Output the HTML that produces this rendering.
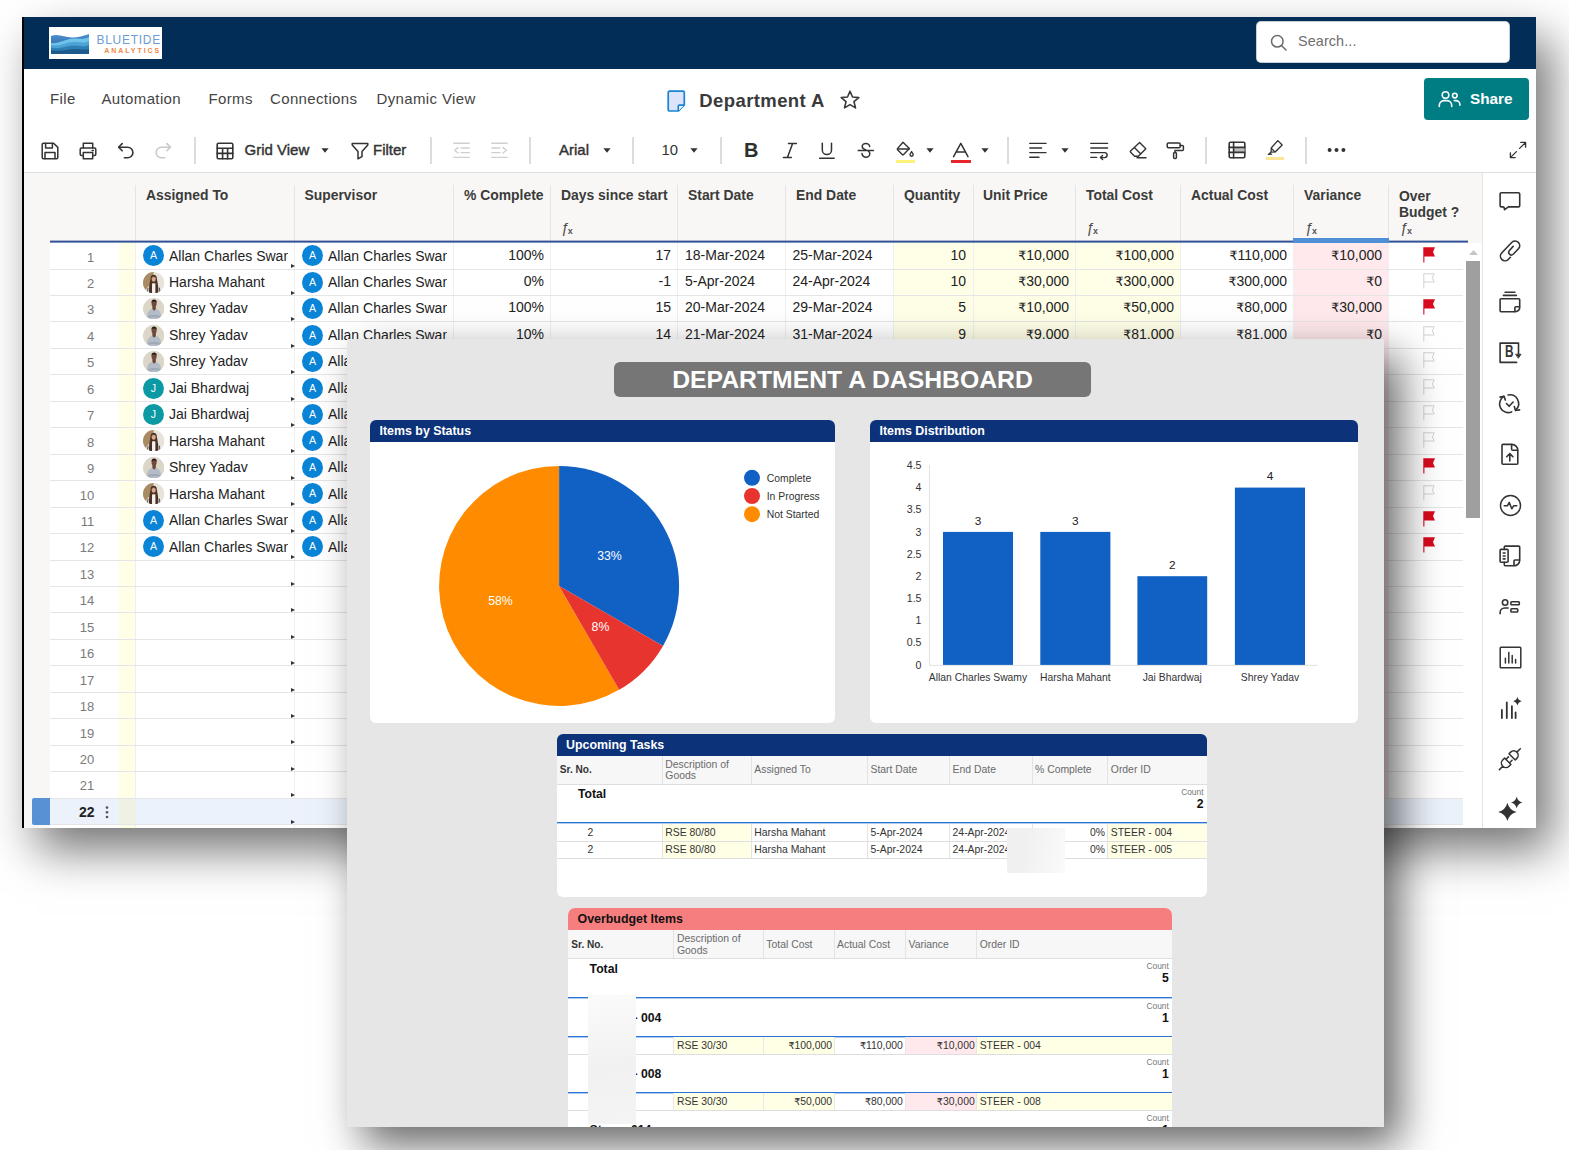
<!DOCTYPE html>
<html lang="en"><head><meta charset="utf-8"><title>Department A</title>
<style>
*{box-sizing:border-box}
html,body{margin:0;padding:0}
body{width:1569px;height:1150px;overflow:hidden;background:#fff;position:relative;font-family:"Liberation Sans","DejaVu Sans",sans-serif;color:#222}
.abs{position:absolute}
#win{position:absolute;left:22px;top:17px;width:1514px;height:811px;background:#fff;box-shadow:15px 22px 44px rgba(0,0,0,.55);overflow:hidden}
#win .lb{position:absolute;left:0;top:0;width:2px;height:811px;background:#000;z-index:9}
#hdr{position:absolute;left:0;top:0;width:1514px;height:52px;background:#012d57}
#logo{position:absolute;left:27px;top:10px;width:113px;height:32px;background:#fff;overflow:hidden}
#search{position:absolute;left:1234.5px;top:5px;width:252px;height:40.4px;background:#fff;border-radius:4px;box-shadow:0 0 0 1px #c9ced4}
#search span{position:absolute;left:41.5px;top:11px;font-size:14.4px;color:#6e6e6e;letter-spacing:.1px}
.menu{position:absolute;top:73px;font-size:15px;color:#444;line-height:18px;white-space:nowrap;letter-spacing:.36px}
#title{position:absolute;left:677.3px;top:72.6px;font-size:18.5px;font-weight:bold;color:#3a3a3a;line-height:22px;white-space:nowrap;letter-spacing:.4px}
#share{position:absolute;left:1402px;top:60.6px;width:105px;height:42.4px;background:#007d83;border-radius:4px}
#share span{position:absolute;left:46px;top:11px;font-size:15.3px;font-weight:bold;color:#fff;line-height:20px}
.tb{position:absolute;top:123px;font-size:15px;color:#333;line-height:18px;white-space:nowrap}
.sep{position:absolute;top:120px;width:2px;height:27px;background:#dcdcdc}
.ic{position:absolute;overflow:visible}

#gh{position:absolute;left:2px;top:156px;width:1458px;height:655px;background:#f8f7f5}
#tbline{position:absolute;left:2px;top:155px;width:1512px;height:1px;background:#dedede}
.hl{position:absolute;font-size:13.9px;font-weight:bold;color:#3b3b3b;line-height:16px;white-space:nowrap}
.hb{position:absolute;top:168px;width:1px;height:56px;background:#e6e5e3}
.fx{position:absolute;top:203px;font-size:14.2px;line-height:16px;color:#4a4a4a;white-space:nowrap}
.fx i{font-style:normal;font-weight:bold;font-size:9px;position:relative;top:1.6px;left:-1.6px;color:#555}
#rows{position:absolute;left:28px;top:226px;width:1432px;height:585px;background:#fff}
.rl{position:absolute;left:28px;width:1413px;height:1px;background:#e5e5e5}
.cl{position:absolute;top:226px;width:1px;height:585px;background:#efefef}
.rn{position:absolute;width:40px;text-align:right;font-size:13px;color:#7b7b7b;line-height:16px}
.c{position:absolute;font-size:14px;line-height:16px;color:#222;white-space:nowrap;overflow:hidden}
.r{text-align:right}
.c b{font-family:"DejaVu Sans",sans-serif;font-weight:normal;font-size:12.6px}
.av{position:absolute;width:21.4px;height:21.4px;border-radius:50%;color:#fff;font-size:10.6px;line-height:21.4px;text-align:center;overflow:hidden}
.tri{position:absolute;width:0;height:0;border-left:4px solid #333;border-top:2.8px solid transparent;border-bottom:2.8px solid transparent}
#side{position:absolute;left:1460px;top:156px;width:54px;height:655px;background:#fff;border-left:1px solid #e4e4e4}

#dash{position:absolute;left:347px;top:339px;width:1037px;height:788px;background:#e6e6e6;box-shadow:16px 18px 40px rgba(0,0,0,.6)}
#dashclip{position:absolute;left:0;top:0;width:1037px;height:788px;overflow:hidden}

#banner{position:absolute;background:#767676;border-radius:6px;color:#fff;font-weight:bold;font-size:24.75px;line-height:35px;text-align:center;white-space:nowrap}
.card{position:absolute;background:#fff;border-radius:6px;overflow:hidden}
.ch{position:absolute;left:0;top:0;right:0;height:22px;background:#0c3279;color:#fff;font-weight:bold;font-size:12.4px;line-height:23px;padding-left:9.5px;white-space:nowrap}
.t{position:absolute;white-space:nowrap;font-size:10.4px;line-height:12px;color:#333}
.th{position:absolute;white-space:nowrap;font-size:10.4px;line-height:11.4px;color:#6a6a6a}
.ru{font-family:"DejaVu Sans",sans-serif;font-weight:normal;font-size:9.5px}
.tr{text-align:right}
.bt{position:absolute;white-space:nowrap;font-size:12.2px;line-height:14px;font-weight:bold;color:#111}
.cnt{position:absolute;white-space:nowrap;font-size:8.4px;line-height:10px;color:#777;text-align:right}
.bl{position:absolute;height:2px;background:linear-gradient(to bottom,#2a75d6 0,#2a75d6 50%,rgba(42,117,214,.38) 50%)}
.gl{position:absolute;height:1px;background:#dedede}
.vl{position:absolute;width:1px;background:#e3e3e3}
svg text{font-family:"Liberation Sans",sans-serif}
</style></head>
<body>
<div id="win">

<div class="lb"></div>
<div id="hdr">
  <div id="logo">
    <svg class="abs" style="left:2px;top:7px" width="38" height="20" viewBox="0 0 38 20">
      <defs><linearGradient id="lg1" x1="0" y1="0" x2="0" y2="1"><stop offset="0" stop-color="#4d8fd1"/><stop offset="1" stop-color="#1f5f96"/></linearGradient></defs>
      <path d="M0 2 C8 -1 14 4 22 3.5 S34 1 38 0 V20 H0Z" fill="url(#lg1)"/>
      <path d="M0 9 C8 10 14 5 22 4.5 S33 6 38 3 V20 H0Z" fill="#6ec3e8"/>
      <path d="M0 11 C9 13 15 8 23 8 S33 10 38 7 V20 H0Z" fill="#4ba3d6"/>
      <path d="M0 13.5 C9 16 16 11 24 11.5 S34 13 38 11 V20 H0Z" fill="#2f7fb6"/>
      <path d="M0 16 C9 18.5 17 14.5 25 15 S34 16 38 15 V20 H0Z" fill="#1d5b8c"/>
    </svg>
    <span class="abs" style="left:47.5px;top:6.2px;font-size:12px;line-height:14px;color:#6d9dd1;letter-spacing:.72px;white-space:nowrap">BLUETIDE</span>
    <span class="abs" style="left:55.2px;top:20.2px;font-size:7px;line-height:8px;color:#ee8743;letter-spacing:1.95px;font-weight:bold;white-space:nowrap">ANALYTICS</span>
  </div>
  <div id="search">
    <svg class="ic" style="left:12.5px;top:11px" width="20" height="20" viewBox="0 0 20 20" fill="none" stroke="#6b6b6b" stroke-width="1.5" stroke-linecap="round"><circle cx="8.3" cy="8.3" r="5.8"/><path d="M12.7 12.7 L17 17"/></svg>
    <span>Search...</span>
  </div>
</div>
<span class="menu" style="left:28px">File</span>
<span class="menu" style="left:79.5px">Automation</span>
<span class="menu" style="left:186.5px">Forms</span>
<span class="menu" style="left:248px">Connections</span>
<span class="menu" style="left:354.5px">Dynamic View</span>
<svg class="ic" style="left:645px;top:73px" width="20" height="23" viewBox="0 0 20 23"><path d="M2.5 1.2 H16 a1.3 1.3 0 0 1 1.3 1.3 V15 L11.5 21 H2.5 a1.3 1.3 0 0 1 -1.3 -1.3 V2.5 a1.3 1.3 0 0 1 1.3 -1.3Z" fill="#dbe4fa" stroke="#1a84d2" stroke-width="1.7"/><path d="M11.3 21 V16.3 a1.2 1.2 0 0 1 1.2 -1.2 H17.3" fill="#fff" stroke="#1a84d2" stroke-width="1.7"/></svg>
<span id="title">Department A</span>
<svg class="ic" style="left:817px;top:72px" width="22" height="22" viewBox="0 0 22 22" fill="none" stroke="#3a3a3a" stroke-width="1.6" stroke-linejoin="round"><path d="M11 2.2 L13.5 8 L19.8 8.6 L15 12.7 L16.5 18.9 L11 15.6 L5.5 18.9 L7 12.7 L2.2 8.6 L8.5 8Z"/></svg>
<div id="share">
  <svg class="ic" style="left:14px;top:12px" width="24" height="18" viewBox="0 0 24 18" fill="none" stroke="#fff" stroke-width="1.6" stroke-linecap="round"><circle cx="7.5" cy="5" r="3.3"/><path d="M1.3 16.5 v-1.3 a4.6 4.6 0 0 1 4.6 -4.6 h3.2 a4.6 4.6 0 0 1 4.6 4.6 v1.3"/><circle cx="16.8" cy="5.6" r="2.3"/><path d="M16.3 10.6 h1.6 a4 4 0 0 1 4 4 v0.6"/></svg>
  <span>Share</span>
</div>
<svg class="ic" style="left:19px;top:125px" width="18" height="18" viewBox="0 0 18 18" fill="none" stroke="#333" stroke-width="1.5" stroke-linecap="round" stroke-linejoin="round" ><path d="M1.2 2.4 a1.2 1.2 0 0 1 1.2 -1.2 H12.6 L16.8 5.4 V15.6 a1.2 1.2 0 0 1 -1.2 1.2 H2.4 a1.2 1.2 0 0 1 -1.2 -1.2Z"/><path d="M4.6 1.4 V6 H11.4 V1.4"/><path d="M4 16.6 V10.4 H14 V16.6"/></svg>
<svg class="ic" style="left:57px;top:125px" width="18" height="18" viewBox="0 0 18 18" fill="none" stroke="#333" stroke-width="1.5" stroke-linecap="round" stroke-linejoin="round" ><path d="M4.3 6 V1.3 H13.7 V6"/><path d="M4.3 13.4 H2.4 a1.2 1.2 0 0 1 -1.2 -1.2 V7.2 a1.2 1.2 0 0 1 1.2 -1.2 H15.6 a1.2 1.2 0 0 1 1.2 1.2 V12.2 a1.2 1.2 0 0 1 -1.2 1.2 H13.7"/><path d="M4.3 10.6 H13.7 V16.7 H4.3Z"/><path d="M13.2 8.4 H14.4"/></svg>
<svg class="ic" style="left:95px;top:125px" width="18" height="18" viewBox="0 0 18 18" fill="none" stroke="#333" stroke-width="1.6" stroke-linecap="round" stroke-linejoin="round" ><path d="M5.2 1.6 L1.6 5.2 L5.2 8.8"/><path d="M2 5.2 H10.6 a5.3 5.3 0 0 1 0 10.6 H7.4"/></svg>
<svg class="ic" style="left:132px;top:125px" width="18" height="18" viewBox="0 0 18 18" fill="none" stroke="#c8c8c8" stroke-width="1.5" stroke-linecap="round" stroke-linejoin="round" ><path d="M12.8 1.6 L16.4 5.2 L12.8 8.8"/><path d="M16 5.2 H7.4 a5.3 5.3 0 0 0 0 10.6 H10.6"/></svg>
<div class="sep" style="left:172px"></div>
<svg class="ic" style="left:194px;top:125px" width="18" height="18" viewBox="0 0 18 18" fill="none" stroke="#333" stroke-width="1.6" stroke-linecap="round" stroke-linejoin="round" ><rect x="1.2" y="1.2" width="15.6" height="15.6" rx="1.3"/><path d="M1.2 6.2 H16.8 M1.2 11.4 H16.8 M6.6 6.2 V16.8 M11.6 6.2 V16.8"/></svg>
<span class="tb" style="left:222.5px;top:124px;color:#333;font-size:15px;-webkit-text-stroke:.42px #333">Grid View</span>
<svg class="ic" style="left:299.3px;top:130.5px" width="8" height="5" viewBox="0 0 8 5"><path d="M0.4 0.3 H7.6 L4 4.8Z" fill="#333"/></svg>
<svg class="ic" style="left:329px;top:125px" width="18" height="18" viewBox="0 0 18 18" fill="none" stroke="#333" stroke-width="1.5" stroke-linecap="round" stroke-linejoin="round" ><path d="M1.2 1.6 H16.8 V3 L11 9.6 V14.6 L7 16.8 V9.6 L1.2 3Z"/></svg>
<span class="tb" style="left:351px;top:124px;color:#333;font-size:15px;-webkit-text-stroke:.42px #333">Filter</span>
<div class="sep" style="left:408px"></div>
<svg class="ic" style="left:431px;top:125px" width="17" height="17" viewBox="0 0 17 17" fill="none" stroke="#cfcfcf" stroke-width="1.4" stroke-linecap="round" stroke-linejoin="round" ><path d="M0.8 1.3 H16.2 M8 6 H16.2 M8 10.6 H16.2 M0.8 15.4 H16.2"/><path d="M5 5.6 L1.6 8.3 L5 11"/></svg>
<svg class="ic" style="left:469px;top:125px" width="17" height="17" viewBox="0 0 17 17" fill="none" stroke="#cfcfcf" stroke-width="1.4" stroke-linecap="round" stroke-linejoin="round" ><path d="M0.8 1.3 H16.2 M0.8 6 H9 M0.8 10.6 H9 M0.8 15.4 H16.2"/><path d="M12 5.6 L15.4 8.3 L12 11"/></svg>
<div class="sep" style="left:507px"></div>
<span class="tb" style="left:537px;top:124px;color:#333;font-size:15px;-webkit-text-stroke:.42px #333">Arial</span>
<svg class="ic" style="left:580.5px;top:130.5px" width="8" height="5" viewBox="0 0 8 5"><path d="M0.4 0.3 H7.6 L4 4.8Z" fill="#333"/></svg>
<div class="sep" style="left:610px"></div>
<span class="tb" style="left:639.5px;top:124px;color:#333;font-size:14.8px">10</span>
<svg class="ic" style="left:667.5px;top:130.5px" width="8" height="5" viewBox="0 0 8 5"><path d="M0.4 0.3 H7.6 L4 4.8Z" fill="#333"/></svg>
<div class="sep" style="left:698px"></div>
<span class="tb" style="left:722px;top:121px;font-weight:bold;color:#2e2e2e;font-size:20px;line-height:24px">B</span>
<svg class="ic" style="left:760px;top:125px" width="16" height="17" viewBox="0 0 16 17" fill="none" stroke="#333" stroke-width="1.5" stroke-linecap="round" stroke-linejoin="round" ><path d="M6.5 1.4 H14.4 M1.4 15.4 H9.3 M10.6 1.4 L5.4 15.4"/></svg>
<svg class="ic" style="left:796px;top:125px" width="18" height="18" viewBox="0 0 18 18" fill="none" stroke="#333" stroke-width="1.5" stroke-linecap="round" stroke-linejoin="round" ><path d="M4.3 1.2 V8 a4.6 4.6 0 0 0 9.2 0 V1.2"/><path d="M1.6 16.3 H16.2"/></svg>
<svg class="ic" style="left:835px;top:125px" width="18" height="18" viewBox="0 0 18 18" fill="none" stroke="#333" stroke-width="1.5" stroke-linecap="round" stroke-linejoin="round" ><path d="M12.6 4.6 a3.8 3.2 0 0 0 -3.8 -3.2 a3.6 3.2 0 0 0 -3.6 3.2 c0 1.6 1.2 2.6 3.6 3.4 M5 11.6 a4 3.6 0 0 0 4 3.6 a3.8 3.4 0 0 0 3.8 -3.4 c0 -1 -.4 -1.8 -1.2 -2.4"/><path d="M1.2 8.5 H16.4"/></svg>
<svg class="ic" style="left:874px;top:124px" width="20" height="18" viewBox="0 0 20 18" fill="none" stroke="#333" stroke-width="1.4" stroke-linecap="round" stroke-linejoin="round" ><path d="M7 1.2 L13.4 7.6 L7.6 13.4 a1 1 0 0 1 -1.4 0 L1.6 8.8 a1 1 0 0 1 0 -1.4 Z"/><path d="M1.6 8 H13"/><path d="M15.6 10.6 c1 1.4 1.6 2.2 1.6 3 a1.6 1.6 0 0 1 -3.2 0 c0 -.8 .6 -1.6 1.6 -3Z"/></svg>
<div class="abs" style="left:873.5px;top:142.5px;width:19.5px;height:3px;background:#fdf37a"></div>
<svg class="ic" style="left:904.2px;top:130.5px" width="8" height="5" viewBox="0 0 8 5"><path d="M0.4 0.3 H7.6 L4 4.8Z" fill="#333"/></svg>
<svg class="ic" style="left:929px;top:125px" width="20" height="16" viewBox="0 0 20 16" fill="none" stroke="#333" stroke-width="1.5" stroke-linecap="round" stroke-linejoin="round" ><path d="M2.6 14.6 L9.8 1.4 L17 14.6 M5.4 10 H14.2"/></svg>
<div class="abs" style="left:928.5px;top:142.5px;width:20.5px;height:3px;background:#e8252b"></div>
<svg class="ic" style="left:959.2px;top:130.5px" width="8" height="5" viewBox="0 0 8 5"><path d="M0.4 0.3 H7.6 L4 4.8Z" fill="#333"/></svg>
<div class="sep" style="left:984.5px"></div>
<svg class="ic" style="left:1007px;top:125px" width="18" height="17" viewBox="0 0 18 17" fill="none" stroke="#333" stroke-width="1.4" stroke-linecap="round" stroke-linejoin="round" ><path d="M0.8 1.4 H17 M0.8 6 H12.6 M0.8 10.6 H17 M0.8 15.2 H10"/></svg>
<svg class="ic" style="left:1038.8px;top:130.5px" width="8" height="5" viewBox="0 0 8 5"><path d="M0.4 0.3 H7.6 L4 4.8Z" fill="#333"/></svg>
<svg class="ic" style="left:1068px;top:125px" width="19" height="18" viewBox="0 0 19 18" fill="none" stroke="#333" stroke-width="1.4" stroke-linecap="round" stroke-linejoin="round" ><path d="M0.8 1.4 H17.6 M0.8 6 H17.6 M0.8 10.6 H14.6 a2.5 2.5 0 0 1 0 5 H11 M0.8 15.4 H6.6"/><path d="M12.6 13.4 L10.4 15.6 L12.6 17.6"/></svg>
<svg class="ic" style="left:1107px;top:124px" width="19" height="18" viewBox="0 0 19 18" fill="none" stroke="#333" stroke-width="1.4" stroke-linecap="round" stroke-linejoin="round" ><path d="M10.6 1.6 L16.8 7.8 L9.4 15.2 H5.6 L1.6 11.2 a.9 .9 0 0 1 0 -1.3Z"/><path d="M5.6 6.8 L11.6 12.8"/><path d="M8 16.8 H17"/></svg>
<svg class="ic" style="left:1144px;top:124px" width="19" height="19" viewBox="0 0 19 19" fill="none" stroke="#333" stroke-width="1.5" stroke-linecap="round" stroke-linejoin="round" ><rect x="1.2" y="2" width="13" height="4.8" rx="1.2"/><path d="M14.2 4.4 H16.4 a1 1 0 0 1 1 1 V8.6 a1 1 0 0 1 -1 1 H9 V11.6"/><rect x="7.6" y="11.6" width="2.8" height="5.8" rx="1"/></svg>
<div class="sep" style="left:1183px"></div>
<svg class="ic" style="left:1206px;top:124px" width="18" height="18" viewBox="0 0 18 18" fill="none" stroke="#333" stroke-width="1.6" stroke-linecap="round" stroke-linejoin="round" ><rect x="1.2" y="1.2" width="15.6" height="15.6" rx="1.2"/><rect x="5.6" y="6.4" width="11" height="5" fill="#bdbdbd" stroke="none"/><path d="M1.2 6.4 H16.8 M1.2 11.4 H16.8 M5.6 1.2 V16.8"/></svg>
<svg class="ic" style="left:1244px;top:122px" width="18" height="18" viewBox="0 0 18 18" fill="none" stroke="#333" stroke-width="1.3" stroke-linecap="round" stroke-linejoin="round" ><path d="M11.8 1.6 L16.2 6 L9.4 12.8 L5 13.2 L5.4 8.8Z"/><path d="M5.4 9.4 L8.8 12.8 M4.6 13.6 L2.4 15.4 L5.6 15.2"/></svg>
<div class="abs" style="left:1244px;top:139.5px;width:17.5px;height:3.5px;background:#fbe597"></div>
<div class="sep" style="left:1283px"></div>
<svg class="ic" style="left:1305px;top:130px" width="19" height="6" viewBox="0 0 19 6" fill="#333"><circle cx="2.6" cy="3" r="2"/><circle cx="9.5" cy="3" r="2"/><circle cx="16.4" cy="3" r="2"/></svg>
<svg class="ic" style="left:1487px;top:124px" width="18" height="18" viewBox="0 0 18 18" fill="none" stroke="#333" stroke-width="1.3" stroke-linecap="round" stroke-linejoin="round" ><path d="M10.6 7.4 L16.6 1.4 M11.8 1.4 H16.6 V6.2 M7.4 10.6 L1.4 16.6 M1.4 11.8 V16.6 H6.2"/></svg>
<div id="tbline"></div><div id="gh"></div>
<span class="hl" style="left:124px;top:170px">Assigned To</span><span class="hl" style="left:282.5px;top:170px">Supervisor</span><span class="hl" style="left:442px;top:170px">% Complete</span><span class="hl" style="left:539px;top:170px">Days since start</span><span class="hl" style="left:666px;top:170px">Start Date</span><span class="hl" style="left:774px;top:170px">End Date</span><span class="hl" style="left:882px;top:170px">Quantity</span><span class="hl" style="left:961px;top:170px">Unit Price</span><span class="hl" style="left:1064px;top:170px">Total Cost</span><span class="hl" style="left:1169px;top:170px">Actual Cost</span><span class="hl" style="left:1282px;top:170px">Variance</span><span class="hl" style="left:1377px;top:171px;line-height:16px">Over<br>Budget ?</span>
<div class="hb" style="left:113.0px"></div><div class="hb" style="left:272.0px"></div><div class="hb" style="left:431.0px"></div><div class="hb" style="left:528.0px"></div><div class="hb" style="left:655.0px"></div><div class="hb" style="left:763.0px"></div><div class="hb" style="left:871.0px"></div><div class="hb" style="left:950.5px"></div><div class="hb" style="left:1053.0px"></div><div class="hb" style="left:1158.0px"></div><div class="hb" style="left:1270.5px"></div><div class="hb" style="left:1366.0px"></div>
<span class="fx" style="left:539.4px;top:202.6px">ƒ<i>x</i></span><span class="fx" style="left:1064.8px;top:202.6px">ƒ<i>x</i></span><span class="fx" style="left:1283.6px;top:202.6px">ƒ<i>x</i></span><span class="fx" style="left:1378.6px;top:202.6px">ƒ<i>x</i></span>
<div id="rows"></div>
<div class="abs" style="left:97px;top:226px;width:17.3px;height:585px;background:#fffee6"></div><div class="abs" style="left:871.5px;top:226px;width:287px;height:585px;background:#ffffe8"></div><div class="abs" style="left:1271px;top:226px;width:95.5px;height:585px;background:#ffe9ec"></div>
<div class="abs" style="left:28px;top:781px;width:1413px;height:27px;background:#ebf2fb"></div><div class="abs" style="left:97px;top:781px;width:17.3px;height:27px;background:#eef1e3"></div><div class="abs" style="left:10px;top:781px;width:18px;height:27px;border-radius:2px 0 0 2px;background:#5992d4"></div>
<div class="cl" style="left:113.0px"></div><div class="cl" style="left:272.0px"></div><div class="cl" style="left:431.0px"></div><div class="cl" style="left:528.0px"></div><div class="cl" style="left:655.0px"></div><div class="cl" style="left:763.0px"></div><div class="cl" style="left:871.0px"></div><div class="cl" style="left:950.5px"></div><div class="cl" style="left:1053.0px"></div><div class="cl" style="left:1158.0px"></div><div class="cl" style="left:1270.5px"></div><div class="cl" style="left:1366.0px"></div>
<div class="rl" style="top:252px"></div><div class="rl" style="top:278px"></div><div class="rl" style="top:304px"></div><div class="rl" style="top:331px"></div><div class="rl" style="top:357px"></div><div class="rl" style="top:384px"></div><div class="rl" style="top:410px"></div><div class="rl" style="top:437px"></div><div class="rl" style="top:463px"></div><div class="rl" style="top:490px"></div><div class="rl" style="top:516px"></div><div class="rl" style="top:543px"></div><div class="rl" style="top:569px"></div><div class="rl" style="top:595px"></div><div class="rl" style="top:622px"></div><div class="rl" style="top:648px"></div><div class="rl" style="top:675px"></div><div class="rl" style="top:701px"></div><div class="rl" style="top:728px"></div><div class="rl" style="top:754px"></div><div class="rl" style="top:781px"></div><div class="rl" style="top:807px"></div>
<div class="abs" style="left:28px;top:223px;width:1417.5px;height:1px;background:rgba(49,80,150,.4)"></div><div class="abs" style="left:28px;top:224px;width:1417.5px;height:1px;background:#33529a"></div><div class="abs" style="left:28px;top:225px;width:1417.5px;height:1px;background:rgba(49,80,150,.62)"></div><div class="abs" style="left:1271px;top:221px;width:95.5px;height:4.5px;background:#4f8fd6"></div>
<span class="rn" style="left:32.3px;top:233px">1</span><div class="tri" style="left:269px;top:247.3px"></div><div class="av" style="left:120.8px;top:228px;background:#0a84d6">A</div><span class="c" style="left:147px;top:231px;width:119px">Allan Charles Swamy</span><div class="av" style="left:279.8px;top:228px;background:#0a84d6">A</div><span class="c" style="left:306px;top:231px;width:119px">Allan Charles Swamy</span><span class="c r" style="left:442px;top:230px;width:80px">100%</span><span class="c r" style="left:569px;top:230px;width:80px">17</span><span class="c" style="left:663px;top:230px">18-Mar-2024</span><span class="c" style="left:770.5px;top:230px">25-Mar-2024</span><span class="c r" style="left:864px;top:230px;width:80px">10</span><span class="c r" style="left:957px;top:230px;width:90px"><b>₹</b>10,000</span><span class="c r" style="left:1062px;top:230px;width:90px"><b>₹</b>100,000</span><span class="c r" style="left:1175px;top:230px;width:90px"><b>₹</b>110,000</span><span class="c r" style="left:1270px;top:230px;width:90px"><b>₹</b>10,000</span><svg class="abs" style="left:1400.5px;top:229.5px" width="13" height="16" viewBox="0 0 13 16"><path d="M0.3 0.3 H12 L10 4.9 L12 9.5 H1.4 V15.5 H0.3Z" fill="#d80a1e"/></svg>
<span class="rn" style="left:32.3px;top:259px">2</span><div class="tri" style="left:269px;top:273.75px"></div><svg class="abs" style="left:120.8px;top:255px" width="21.4" height="21.4" viewBox="0 0 21 21"><defs><clipPath id="cp2"><circle cx="10.5" cy="10.5" r="10.5"/></clipPath></defs><g clip-path="url(#cp2)"><rect width="21" height="21" fill="#e7e3db"/><path d="M0 0 H10.5 L8 21 H0Z" fill="#a98b62"/><path d="M2.6 21 C2.8 15.5 5 13 10.5 12.6 C16 13 18.2 15.5 18.4 21Z" fill="#ecebe8"/><path d="M4.2 21 L5 15.4 M16.8 21 L16 15.4" stroke="#5b5f66" stroke-width="1.1" fill="none"/><path d="M7.4 6.4 C7.2 1.6 13.8 1.6 13.6 6.4 C14.2 11 15.6 15 15 21 L12 21 L12 11.4 L9 11.4 L9 21 L6 21 C5.4 15 6.8 11 7.4 6.4Z" fill="#4b3024"/><path d="M9 11.2 H12 V21 H9Z" fill="#f4f2ef"/><ellipse cx="10.5" cy="6.9" rx="2" ry="2.7" fill="#d9a98e"/><path d="M8.5 5.6 C9 3.6 12 3.6 12.5 5.6 C11.6 4.8 9.4 4.8 8.5 5.6Z" fill="#4b3024"/></g></svg><span class="c" style="left:147px;top:257px;width:119px">Harsha Mahant</span><div class="av" style="left:279.8px;top:255px;background:#0a84d6">A</div><span class="c" style="left:306px;top:257px;width:119px">Allan Charles Swamy</span><span class="c r" style="left:442px;top:256px;width:80px">0%</span><span class="c r" style="left:569px;top:256px;width:80px">-1</span><span class="c" style="left:663px;top:256px">5-Apr-2024</span><span class="c" style="left:770.5px;top:256px">24-Apr-2024</span><span class="c r" style="left:864px;top:256px;width:80px">10</span><span class="c r" style="left:957px;top:256px;width:90px"><b>₹</b>30,000</span><span class="c r" style="left:1062px;top:256px;width:90px"><b>₹</b>300,000</span><span class="c r" style="left:1175px;top:256px;width:90px"><b>₹</b>300,000</span><span class="c r" style="left:1270px;top:256px;width:90px"><b>₹</b>0</span><svg class="abs" style="left:1400.5px;top:255.95px" width="13" height="16" viewBox="0 0 13 16"><path d="M0.8 0.8 H11.2 L9.4 4.9 L11.2 9 H0.8 M0.8 0.3 V15.5" fill="none" stroke="#d2d2d2" stroke-width="1"/></svg>
<span class="rn" style="left:32.3px;top:285px">3</span><div class="tri" style="left:269px;top:300.2px"></div><svg class="abs" style="left:120.8px;top:281px" width="21.4" height="21.4" viewBox="0 0 21 21"><defs><clipPath id="cp3"><circle cx="10.5" cy="10.5" r="10.5"/></clipPath></defs><g clip-path="url(#cp3)"><rect width="21" height="21" fill="#dcd6c9"/><path d="M3.6 21 C3.6 13.6 6 10.6 10.9 10.6 S18 13.6 18 21Z" fill="#b4bcc7"/><path d="M9.2 7.4 H12.6 V10.8 L10.9 12.6 L9.2 10.8Z" fill="#6a4836"/><ellipse cx="10.9" cy="5.3" rx="2.5" ry="3.1" fill="#70493a"/><path d="M8.3 4.6 C8 0.4 13.8 0.4 13.5 4.6 C12.6 3 9.2 3 8.3 4.6Z" fill="#2a1c17"/><path d="M5 17.6 C8 16.4 13.6 16.4 16.6 17.6 L16.4 19.4 C13 18.4 8.4 18.4 5.2 19.4Z" fill="#9fa9b6"/></g></svg><span class="c" style="left:147px;top:283px;width:119px">Shrey Yadav</span><div class="av" style="left:279.8px;top:281px;background:#0a84d6">A</div><span class="c" style="left:306px;top:283px;width:119px">Allan Charles Swamy</span><span class="c r" style="left:442px;top:282px;width:80px">100%</span><span class="c r" style="left:569px;top:282px;width:80px">15</span><span class="c" style="left:663px;top:282px">20-Mar-2024</span><span class="c" style="left:770.5px;top:282px">29-Mar-2024</span><span class="c r" style="left:864px;top:282px;width:80px">5</span><span class="c r" style="left:957px;top:282px;width:90px"><b>₹</b>10,000</span><span class="c r" style="left:1062px;top:282px;width:90px"><b>₹</b>50,000</span><span class="c r" style="left:1175px;top:282px;width:90px"><b>₹</b>80,000</span><span class="c r" style="left:1270px;top:282px;width:90px"><b>₹</b>30,000</span><svg class="abs" style="left:1400.5px;top:282.4px" width="13" height="16" viewBox="0 0 13 16"><path d="M0.3 0.3 H12 L10 4.9 L12 9.5 H1.4 V15.5 H0.3Z" fill="#d80a1e"/></svg>
<span class="rn" style="left:32.3px;top:312px">4</span><div class="tri" style="left:269px;top:326.65px"></div><svg class="abs" style="left:120.8px;top:308px" width="21.4" height="21.4" viewBox="0 0 21 21"><defs><clipPath id="cp4"><circle cx="10.5" cy="10.5" r="10.5"/></clipPath></defs><g clip-path="url(#cp4)"><rect width="21" height="21" fill="#dcd6c9"/><path d="M3.6 21 C3.6 13.6 6 10.6 10.9 10.6 S18 13.6 18 21Z" fill="#b4bcc7"/><path d="M9.2 7.4 H12.6 V10.8 L10.9 12.6 L9.2 10.8Z" fill="#6a4836"/><ellipse cx="10.9" cy="5.3" rx="2.5" ry="3.1" fill="#70493a"/><path d="M8.3 4.6 C8 0.4 13.8 0.4 13.5 4.6 C12.6 3 9.2 3 8.3 4.6Z" fill="#2a1c17"/><path d="M5 17.6 C8 16.4 13.6 16.4 16.6 17.6 L16.4 19.4 C13 18.4 8.4 18.4 5.2 19.4Z" fill="#9fa9b6"/></g></svg><span class="c" style="left:147px;top:310px;width:119px">Shrey Yadav</span><div class="av" style="left:279.8px;top:308px;background:#0a84d6">A</div><span class="c" style="left:306px;top:310px;width:119px">Allan Charles Swamy</span><span class="c r" style="left:442px;top:309px;width:80px">10%</span><span class="c r" style="left:569px;top:309px;width:80px">14</span><span class="c" style="left:663px;top:309px">21-Mar-2024</span><span class="c" style="left:770.5px;top:309px">31-Mar-2024</span><span class="c r" style="left:864px;top:309px;width:80px">9</span><span class="c r" style="left:957px;top:309px;width:90px"><b>₹</b>9,000</span><span class="c r" style="left:1062px;top:309px;width:90px"><b>₹</b>81,000</span><span class="c r" style="left:1175px;top:309px;width:90px"><b>₹</b>81,000</span><span class="c r" style="left:1270px;top:309px;width:90px"><b>₹</b>0</span><svg class="abs" style="left:1400.5px;top:308.85px" width="13" height="16" viewBox="0 0 13 16"><path d="M0.8 0.8 H11.2 L9.4 4.9 L11.2 9 H0.8 M0.8 0.3 V15.5" fill="none" stroke="#d2d2d2" stroke-width="1"/></svg>
<span class="rn" style="left:32.3px;top:338px">5</span><div class="tri" style="left:269px;top:353.1px"></div><svg class="abs" style="left:120.8px;top:334px" width="21.4" height="21.4" viewBox="0 0 21 21"><defs><clipPath id="cp5"><circle cx="10.5" cy="10.5" r="10.5"/></clipPath></defs><g clip-path="url(#cp5)"><rect width="21" height="21" fill="#dcd6c9"/><path d="M3.6 21 C3.6 13.6 6 10.6 10.9 10.6 S18 13.6 18 21Z" fill="#b4bcc7"/><path d="M9.2 7.4 H12.6 V10.8 L10.9 12.6 L9.2 10.8Z" fill="#6a4836"/><ellipse cx="10.9" cy="5.3" rx="2.5" ry="3.1" fill="#70493a"/><path d="M8.3 4.6 C8 0.4 13.8 0.4 13.5 4.6 C12.6 3 9.2 3 8.3 4.6Z" fill="#2a1c17"/><path d="M5 17.6 C8 16.4 13.6 16.4 16.6 17.6 L16.4 19.4 C13 18.4 8.4 18.4 5.2 19.4Z" fill="#9fa9b6"/></g></svg><span class="c" style="left:147px;top:336px;width:119px">Shrey Yadav</span><div class="av" style="left:279.8px;top:334px;background:#0a84d6">A</div><span class="c" style="left:306px;top:336px;width:119px">Allan Charles Swamy</span><span class="c r" style="left:442px;top:335px;width:80px">50%</span><span class="c r" style="left:569px;top:335px;width:80px">12</span><span class="c" style="left:663px;top:335px">23-Mar-2024</span><span class="c" style="left:770.5px;top:335px">2-Apr-2024</span><span class="c r" style="left:864px;top:335px;width:80px">8</span><span class="c r" style="left:957px;top:335px;width:90px"><b>₹</b>12,000</span><span class="c r" style="left:1062px;top:335px;width:90px"><b>₹</b>96,000</span><span class="c r" style="left:1175px;top:335px;width:90px"><b>₹</b>96,000</span><span class="c r" style="left:1270px;top:335px;width:90px"><b>₹</b>0</span><svg class="abs" style="left:1400.5px;top:335.3px" width="13" height="16" viewBox="0 0 13 16"><path d="M0.8 0.8 H11.2 L9.4 4.9 L11.2 9 H0.8 M0.8 0.3 V15.5" fill="none" stroke="#d2d2d2" stroke-width="1"/></svg>
<span class="rn" style="left:32.3px;top:365px">6</span><div class="tri" style="left:269px;top:379.55px"></div><div class="av" style="left:120.8px;top:361px;background:#0b9aa3">J</div><span class="c" style="left:147px;top:363px;width:119px">Jai Bhardwaj</span><div class="av" style="left:279.8px;top:361px;background:#0a84d6">A</div><span class="c" style="left:306px;top:363px;width:119px">Allan Charles Swamy</span><span class="c r" style="left:442px;top:362px;width:80px">0%</span><span class="c r" style="left:569px;top:362px;width:80px">-3</span><span class="c" style="left:663px;top:362px">7-Apr-2024</span><span class="c" style="left:770.5px;top:362px">20-Apr-2024</span><span class="c r" style="left:864px;top:362px;width:80px">4</span><span class="c r" style="left:957px;top:362px;width:90px"><b>₹</b>15,000</span><span class="c r" style="left:1062px;top:362px;width:90px"><b>₹</b>60,000</span><span class="c r" style="left:1175px;top:362px;width:90px"><b>₹</b>60,000</span><span class="c r" style="left:1270px;top:362px;width:90px"><b>₹</b>0</span><svg class="abs" style="left:1400.5px;top:361.75px" width="13" height="16" viewBox="0 0 13 16"><path d="M0.8 0.8 H11.2 L9.4 4.9 L11.2 9 H0.8 M0.8 0.3 V15.5" fill="none" stroke="#d2d2d2" stroke-width="1"/></svg>
<span class="rn" style="left:32.3px;top:391px">7</span><div class="tri" style="left:269px;top:406.0px"></div><div class="av" style="left:120.8px;top:387px;background:#0b9aa3">J</div><span class="c" style="left:147px;top:389px;width:119px">Jai Bhardwaj</span><div class="av" style="left:279.8px;top:387px;background:#0a84d6">A</div><span class="c" style="left:306px;top:389px;width:119px">Allan Charles Swamy</span><span class="c r" style="left:442px;top:388px;width:80px">0%</span><span class="c r" style="left:569px;top:388px;width:80px">-5</span><span class="c" style="left:663px;top:388px">9-Apr-2024</span><span class="c" style="left:770.5px;top:388px">22-Apr-2024</span><span class="c r" style="left:864px;top:388px;width:80px">6</span><span class="c r" style="left:957px;top:388px;width:90px"><b>₹</b>11,000</span><span class="c r" style="left:1062px;top:388px;width:90px"><b>₹</b>66,000</span><span class="c r" style="left:1175px;top:388px;width:90px"><b>₹</b>66,000</span><span class="c r" style="left:1270px;top:388px;width:90px"><b>₹</b>0</span><svg class="abs" style="left:1400.5px;top:388.2px" width="13" height="16" viewBox="0 0 13 16"><path d="M0.8 0.8 H11.2 L9.4 4.9 L11.2 9 H0.8 M0.8 0.3 V15.5" fill="none" stroke="#d2d2d2" stroke-width="1"/></svg>
<span class="rn" style="left:32.3px;top:418px">8</span><div class="tri" style="left:269px;top:432.45px"></div><svg class="abs" style="left:120.8px;top:413px" width="21.4" height="21.4" viewBox="0 0 21 21"><defs><clipPath id="cp8"><circle cx="10.5" cy="10.5" r="10.5"/></clipPath></defs><g clip-path="url(#cp8)"><rect width="21" height="21" fill="#e7e3db"/><path d="M0 0 H10.5 L8 21 H0Z" fill="#a98b62"/><path d="M2.6 21 C2.8 15.5 5 13 10.5 12.6 C16 13 18.2 15.5 18.4 21Z" fill="#ecebe8"/><path d="M4.2 21 L5 15.4 M16.8 21 L16 15.4" stroke="#5b5f66" stroke-width="1.1" fill="none"/><path d="M7.4 6.4 C7.2 1.6 13.8 1.6 13.6 6.4 C14.2 11 15.6 15 15 21 L12 21 L12 11.4 L9 11.4 L9 21 L6 21 C5.4 15 6.8 11 7.4 6.4Z" fill="#4b3024"/><path d="M9 11.2 H12 V21 H9Z" fill="#f4f2ef"/><ellipse cx="10.5" cy="6.9" rx="2" ry="2.7" fill="#d9a98e"/><path d="M8.5 5.6 C9 3.6 12 3.6 12.5 5.6 C11.6 4.8 9.4 4.8 8.5 5.6Z" fill="#4b3024"/></g></svg><span class="c" style="left:147px;top:416px;width:119px">Harsha Mahant</span><div class="av" style="left:279.8px;top:413px;background:#0a84d6">A</div><span class="c" style="left:306px;top:416px;width:119px">Allan Charles Swamy</span><span class="c r" style="left:442px;top:415px;width:80px">0%</span><span class="c r" style="left:569px;top:415px;width:80px">-1</span><span class="c" style="left:663px;top:415px">5-Apr-2024</span><span class="c" style="left:770.5px;top:415px">24-Apr-2024</span><span class="c r" style="left:864px;top:415px;width:80px">10</span><span class="c r" style="left:957px;top:415px;width:90px"><b>₹</b>30,000</span><span class="c r" style="left:1062px;top:415px;width:90px"><b>₹</b>300,000</span><span class="c r" style="left:1175px;top:415px;width:90px"><b>₹</b>300,000</span><span class="c r" style="left:1270px;top:415px;width:90px"><b>₹</b>0</span><svg class="abs" style="left:1400.5px;top:414.65px" width="13" height="16" viewBox="0 0 13 16"><path d="M0.8 0.8 H11.2 L9.4 4.9 L11.2 9 H0.8 M0.8 0.3 V15.5" fill="none" stroke="#d2d2d2" stroke-width="1"/></svg>
<span class="rn" style="left:32.3px;top:444px">9</span><div class="tri" style="left:269px;top:458.9px"></div><svg class="abs" style="left:120.8px;top:440px" width="21.4" height="21.4" viewBox="0 0 21 21"><defs><clipPath id="cp9"><circle cx="10.5" cy="10.5" r="10.5"/></clipPath></defs><g clip-path="url(#cp9)"><rect width="21" height="21" fill="#dcd6c9"/><path d="M3.6 21 C3.6 13.6 6 10.6 10.9 10.6 S18 13.6 18 21Z" fill="#b4bcc7"/><path d="M9.2 7.4 H12.6 V10.8 L10.9 12.6 L9.2 10.8Z" fill="#6a4836"/><ellipse cx="10.9" cy="5.3" rx="2.5" ry="3.1" fill="#70493a"/><path d="M8.3 4.6 C8 0.4 13.8 0.4 13.5 4.6 C12.6 3 9.2 3 8.3 4.6Z" fill="#2a1c17"/><path d="M5 17.6 C8 16.4 13.6 16.4 16.6 17.6 L16.4 19.4 C13 18.4 8.4 18.4 5.2 19.4Z" fill="#9fa9b6"/></g></svg><span class="c" style="left:147px;top:442px;width:119px">Shrey Yadav</span><div class="av" style="left:279.8px;top:440px;background:#0a84d6">A</div><span class="c" style="left:306px;top:442px;width:119px">Allan Charles Swamy</span><span class="c r" style="left:442px;top:441px;width:80px">100%</span><span class="c r" style="left:569px;top:441px;width:80px">10</span><span class="c" style="left:663px;top:441px">25-Mar-2024</span><span class="c" style="left:770.5px;top:441px">1-Apr-2024</span><span class="c r" style="left:864px;top:441px;width:80px">7</span><span class="c r" style="left:957px;top:441px;width:90px"><b>₹</b>20,000</span><span class="c r" style="left:1062px;top:441px;width:90px"><b>₹</b>140,000</span><span class="c r" style="left:1175px;top:441px;width:90px"><b>₹</b>150,000</span><span class="c r" style="left:1270px;top:441px;width:90px"><b>₹</b>10,000</span><svg class="abs" style="left:1400.5px;top:441.1px" width="13" height="16" viewBox="0 0 13 16"><path d="M0.3 0.3 H12 L10 4.9 L12 9.5 H1.4 V15.5 H0.3Z" fill="#d80a1e"/></svg>
<span class="rn" style="left:32.3px;top:471px">10</span><div class="tri" style="left:269px;top:485.35px"></div><svg class="abs" style="left:120.8px;top:466px" width="21.4" height="21.4" viewBox="0 0 21 21"><defs><clipPath id="cp10"><circle cx="10.5" cy="10.5" r="10.5"/></clipPath></defs><g clip-path="url(#cp10)"><rect width="21" height="21" fill="#e7e3db"/><path d="M0 0 H10.5 L8 21 H0Z" fill="#a98b62"/><path d="M2.6 21 C2.8 15.5 5 13 10.5 12.6 C16 13 18.2 15.5 18.4 21Z" fill="#ecebe8"/><path d="M4.2 21 L5 15.4 M16.8 21 L16 15.4" stroke="#5b5f66" stroke-width="1.1" fill="none"/><path d="M7.4 6.4 C7.2 1.6 13.8 1.6 13.6 6.4 C14.2 11 15.6 15 15 21 L12 21 L12 11.4 L9 11.4 L9 21 L6 21 C5.4 15 6.8 11 7.4 6.4Z" fill="#4b3024"/><path d="M9 11.2 H12 V21 H9Z" fill="#f4f2ef"/><ellipse cx="10.5" cy="6.9" rx="2" ry="2.7" fill="#d9a98e"/><path d="M8.5 5.6 C9 3.6 12 3.6 12.5 5.6 C11.6 4.8 9.4 4.8 8.5 5.6Z" fill="#4b3024"/></g></svg><span class="c" style="left:147px;top:469px;width:119px">Harsha Mahant</span><div class="av" style="left:279.8px;top:466px;background:#0a84d6">A</div><span class="c" style="left:306px;top:469px;width:119px">Allan Charles Swamy</span><span class="c r" style="left:442px;top:468px;width:80px">0%</span><span class="c r" style="left:569px;top:468px;width:80px">-6</span><span class="c" style="left:663px;top:468px">10-Apr-2024</span><span class="c" style="left:770.5px;top:468px">25-Apr-2024</span><span class="c r" style="left:864px;top:468px;width:80px">3</span><span class="c r" style="left:957px;top:468px;width:90px"><b>₹</b>25,000</span><span class="c r" style="left:1062px;top:468px;width:90px"><b>₹</b>75,000</span><span class="c r" style="left:1175px;top:468px;width:90px"><b>₹</b>75,000</span><span class="c r" style="left:1270px;top:468px;width:90px"><b>₹</b>0</span><svg class="abs" style="left:1400.5px;top:467.55px" width="13" height="16" viewBox="0 0 13 16"><path d="M0.8 0.8 H11.2 L9.4 4.9 L11.2 9 H0.8 M0.8 0.3 V15.5" fill="none" stroke="#d2d2d2" stroke-width="1"/></svg>
<span class="rn" style="left:32.3px;top:497px">11</span><div class="tri" style="left:269px;top:511.8px"></div><div class="av" style="left:120.8px;top:493px;background:#0a84d6">A</div><span class="c" style="left:147px;top:495px;width:119px">Allan Charles Swamy</span><div class="av" style="left:279.8px;top:493px;background:#0a84d6">A</div><span class="c" style="left:306px;top:495px;width:119px">Allan Charles Swamy</span><span class="c r" style="left:442px;top:494px;width:80px">100%</span><span class="c r" style="left:569px;top:494px;width:80px">9</span><span class="c" style="left:663px;top:494px">26-Mar-2024</span><span class="c" style="left:770.5px;top:494px">3-Apr-2024</span><span class="c r" style="left:864px;top:494px;width:80px">2</span><span class="c r" style="left:957px;top:494px;width:90px"><b>₹</b>40,000</span><span class="c r" style="left:1062px;top:494px;width:90px"><b>₹</b>80,000</span><span class="c r" style="left:1175px;top:494px;width:90px"><b>₹</b>95,000</span><span class="c r" style="left:1270px;top:494px;width:90px"><b>₹</b>15,000</span><svg class="abs" style="left:1400.5px;top:494.0px" width="13" height="16" viewBox="0 0 13 16"><path d="M0.3 0.3 H12 L10 4.9 L12 9.5 H1.4 V15.5 H0.3Z" fill="#d80a1e"/></svg>
<span class="rn" style="left:32.3px;top:523px">12</span><div class="tri" style="left:269px;top:538.25px"></div><div class="av" style="left:120.8px;top:519px;background:#0a84d6">A</div><span class="c" style="left:147px;top:522px;width:119px">Allan Charles Swamy</span><div class="av" style="left:279.8px;top:519px;background:#0a84d6">A</div><span class="c" style="left:306px;top:522px;width:119px">Allan Charles Swamy</span><span class="c r" style="left:442px;top:521px;width:80px">0%</span><span class="c r" style="left:569px;top:521px;width:80px">-8</span><span class="c" style="left:663px;top:521px">12-Apr-2024</span><span class="c" style="left:770.5px;top:521px">28-Apr-2024</span><span class="c r" style="left:864px;top:521px;width:80px">5</span><span class="c r" style="left:957px;top:521px;width:90px"><b>₹</b>18,000</span><span class="c r" style="left:1062px;top:521px;width:90px"><b>₹</b>90,000</span><span class="c r" style="left:1175px;top:521px;width:90px"><b>₹</b>99,000</span><span class="c r" style="left:1270px;top:521px;width:90px"><b>₹</b>9,000</span><svg class="abs" style="left:1400.5px;top:520.45px" width="13" height="16" viewBox="0 0 13 16"><path d="M0.3 0.3 H12 L10 4.9 L12 9.5 H1.4 V15.5 H0.3Z" fill="#d80a1e"/></svg>
<span class="rn" style="left:32.3px;top:550px">13</span><div class="tri" style="left:269px;top:564.7px"></div>
<span class="rn" style="left:32.3px;top:576px">14</span><div class="tri" style="left:269px;top:591.15px"></div>
<span class="rn" style="left:32.3px;top:603px">15</span><div class="tri" style="left:269px;top:617.6px"></div>
<span class="rn" style="left:32.3px;top:629px">16</span><div class="tri" style="left:269px;top:644.05px"></div>
<span class="rn" style="left:32.3px;top:656px">17</span><div class="tri" style="left:269px;top:670.5px"></div>
<span class="rn" style="left:32.3px;top:682px">18</span><div class="tri" style="left:269px;top:696.95px"></div>
<span class="rn" style="left:32.3px;top:709px">19</span><div class="tri" style="left:269px;top:723.4px"></div>
<span class="rn" style="left:32.3px;top:735px">20</span><div class="tri" style="left:269px;top:749.85px"></div>
<span class="rn" style="left:32.3px;top:761px">21</span><div class="tri" style="left:269px;top:776.3px"></div>
<span class="rn" style="left:32.5px;top:787px;font-weight:bold;color:#222;font-size:14px">22</span><svg class="abs" style="left:82.5px;top:789px" width="4" height="13" viewBox="0 0 4 13" fill="#555"><circle cx="2" cy="1.6" r="1.3"/><circle cx="2" cy="6.3" r="1.3"/><circle cx="2" cy="11" r="1.3"/></svg><div class="tri" style="left:269px;top:802.75px"></div>
<svg class="abs" style="left:1446.5px;top:232.5px" width="9" height="5" viewBox="0 0 9 5"><path d="M0 5 L4.5 0 L9 5Z" fill="#c6c6c6"/></svg><div class="abs" style="left:1444px;top:243.5px;width:14px;height:257px;background:#9f9f9f"></div>
<div id="side"></div>
<svg class="ic" style="left:1468px;top:164px" width="40" height="40" viewBox="0 0 40 40" fill="none" stroke="#333" stroke-width="1.6" stroke-linecap="round" stroke-linejoin="round"><path d="M11.3 11.7 H28.5 a1.2 1.2 0 0 1 1.2 1.2 V24.7 a1.2 1.2 0 0 1 -1.2 1.2 H18.4 L14.6 28.7 L14.2 27 a1.2 1.2 0 0 0 -1.2 -1.1 H11.3 a1.2 1.2 0 0 1 -1.2 -1.2 V12.9 a1.2 1.2 0 0 1 1.2 -1.2Z"/></svg>
<svg class="ic" style="left:1468px;top:215px" width="40" height="40" viewBox="0 0 40 40" fill="none" stroke="#333" stroke-width="1.6" stroke-linecap="round" stroke-linejoin="round"><path d="M23.1 14.4 L19.43 18.53 A2.65 2.65 0 0 0 23.17 22.27 L28.45 16.75 A4.6 4.6 0 0 0 21.95 10.25 L11.65 21.05 A4.6 4.6 0 0 0 18.15 27.55 L20.4 25.3"/></svg>
<svg class="ic" style="left:1468px;top:265px" width="40" height="40" viewBox="0 0 40 40" fill="none" stroke="#333" stroke-width="1.6" stroke-linecap="round" stroke-linejoin="round"><path d="M15.1 10.2 H24.9 M13.4 13.4 H26.4"/><path d="M11.1 16.7 H28.7 a1 1 0 0 1 1 1 V25.4 a4.3 4.3 0 0 1 -4.3 4.3 H11.1 a1 1 0 0 1 -1 -1 V17.7 a1 1 0 0 1 1 -1Z"/><path d="M24.9 29.5 V25.7 a1 1 0 0 1 1 -1 H29.5"/></svg>
<svg class="ic" style="left:1468px;top:316px" width="40" height="40" viewBox="0 0 40 40" fill="none" stroke="#333" stroke-width="1.6" stroke-linecap="round" stroke-linejoin="round"><path d="M28.5 21 V10.1 H10.1 V29.4 H26.6"/><path d="M25.9 21.2 H31.1 L28.5 25Z" fill="#333" stroke-width=".8"/></svg>
<span class="abs" style="left:1482.9px;top:326.3px;font-size:16px;line-height:18px;font-weight:bold;color:#333;transform:scaleX(.74);transform-origin:0 0">B</span>
<svg class="ic" style="left:1468px;top:366px" width="40" height="40" viewBox="0 0 40 40" fill="none" stroke="#333" stroke-width="1.6" stroke-linecap="round" stroke-linejoin="round"><path d="M18.1 12 A8.7 8.7 0 0 1 26 26.7"/><path d="M24.3 23.6 L25.5 27.5 L29.6 26.9"/><path d="M21.6 28.9 A8.7 8.7 0 0 1 13.8 13.4"/><path d="M10.1 14.1 L14.1 13.2 L15.3 17"/><path d="M16.5 20.5 L19.1 23.3 L23.1 19"/></svg>
<svg class="ic" style="left:1468px;top:417px" width="40" height="40" viewBox="0 0 40 40" fill="none" stroke="#333" stroke-width="1.6" stroke-linecap="round" stroke-linejoin="round"><path d="M13 10.4 H21.8 a6 6 0 0 1 6 6 V29.3 a1 1 0 0 1 -1 1 H13 a1 1 0 0 1 -1 -1 V11.4 a1 1 0 0 1 1 -1Z"/><path d="M21.6 10.6 V15.3 a1 1 0 0 0 1 1 H27.6"/><path d="M19.8 27 V19.9 M16.7 22.7 L19.8 19.6 L22.9 22.7"/></svg>
<svg class="ic" style="left:1476.5px;top:476.9px" width="23" height="23" viewBox="0 0 23 23" fill="none" stroke="#333" stroke-width="1.5" stroke-linecap="round" stroke-linejoin="round"><circle cx="11.5" cy="11.5" r="10"/><path d="M5.2 11.8 H8.4 L10.2 8.4 L12.8 14.8 L14.6 11.8 H17.8"/></svg>
<svg class="ic" style="left:1468px;top:519px" width="40" height="40" viewBox="0 0 40 40" fill="none" stroke="#333" stroke-width="1.6" stroke-linecap="round" stroke-linejoin="round"><path d="M14.3 13.4 V11.1 a1 1 0 0 1 1 -1 H28.7 a1 1 0 0 1 1 1 V24.2 a5.5 5.5 0 0 1 -5.5 5.5 H15.3 a1 1 0 0 1 -1 -1 V26.3"/><path d="M24 29.5 V25 a1 1 0 0 1 1 -1 H29.5"/><rect x="10.1" y="13.4" width="8" height="12.9" rx="1"/><path d="M13.3 17 H15 M13.3 20 H15 M13.3 22.8 H15" stroke-width="1.7"/></svg>
<svg class="ic" style="left:1468px;top:570px" width="40" height="40" viewBox="0 0 40 40" fill="none" stroke="#333" stroke-width="1.6" stroke-linecap="round" stroke-linejoin="round"><circle cx="15.1" cy="15.5" r="2.7"/><path d="M10.1 26.8 V25.6 a4.6 4.6 0 0 1 4.6 -4.6 H18.1"/><rect x="20.9" y="14.7" width="8.4" height="3" rx=".7"/><rect x="20.9" y="21.8" width="6.8" height="3.2" rx=".7"/></svg>
<svg class="ic" style="left:1476.5px;top:629.1px" width="23" height="23" viewBox="0 0 23 23" fill="none" stroke="#333" stroke-width="1.5" stroke-linecap="round" stroke-linejoin="round"><rect x="1.2" y="1.2" width="20.6" height="20.6" rx=".8"/><path d="M6.4 17 V12.2 M9.8 17 V6.4 M13.2 17 V9.6 M16.6 17 V13.4"/></svg>
<svg class="ic" style="left:1468px;top:671px" width="40" height="40" viewBox="0 0 40 40" fill="none" stroke="#333" stroke-width="1.6" stroke-linecap="round" stroke-linejoin="round"><path d="M11.9 30 V21.8 M16.8 30 V14.5 M21.9 30 V18.2 M25.6 30 V24.5" stroke-width="1.8"/><path d="M27.4 8.80 Q28.19 12.41 31.80 13.2 Q28.19 13.99 27.4 17.60 Q26.61 13.99 23.00 13.2 Q26.61 12.41 27.4 8.80Z" fill="#333" stroke="none"/></svg>
<svg class="ic" style="left:1468px;top:722px" width="40" height="40" viewBox="0 0 40 40" fill="none" stroke="#333" stroke-width="1.5" stroke-linecap="round" stroke-linejoin="round"><g transform="translate(20 20) rotate(-45)"><path d="M3 -4.4 H5.3 a4.4 4.4 0 0 1 0 8.8 H3Z M9.7 0 H14.6 M-3.2 -4.5 H-5.8 a4.5 4.5 0 0 0 0 9 H-3.2Z M-10.3 0 H-15 M-3.2 -2.6 H0.4 M-3.2 2.4 H0.5"/></g></svg>
<svg class="ic" style="left:1468px;top:772px" width="40" height="40" viewBox="0 0 40 40" fill="none" stroke="#333" stroke-width="1.6" stroke-linecap="round" stroke-linejoin="round"><path d="M17.4 13.70 Q19.24 21.06 26.60 22.9 Q19.24 24.74 17.4 32.10 Q15.56 24.74 8.20 22.9 Q15.56 21.06 17.4 13.70Z" fill="#333" stroke="none"/><path d="M26.7 7.80 Q27.84 12.36 32.40 13.5 Q27.84 14.64 26.7 19.20 Q25.56 14.64 21.00 13.5 Q25.56 12.36 26.7 7.80Z" fill="#333" stroke="none"/></svg>
</div>
<div id="dash"><div id="dashclip">
<div id="banner" style="left:267px;top:23px;width:477px;height:35px">DEPARTMENT A DASHBOARD</div>
<div class="card" style="left:23px;top:81px;width:465px;height:302.5px"><div class="ch">Items by Status</div>
<svg class="abs" style="left:0;top:1px" width="465" height="301" viewBox="0 0 465 301"><path d="M189.10 164.90 L249.1 268.82 A120 120 0 1 1 189.1 44.9Z" fill="#ff8c00"/><path d="M189.10 164.90 L189.1 44.9 A120 120 0 0 1 293.02 224.9Z" fill="#1160c4"/><path d="M189.10 164.90 L293.02 224.9 A120 120 0 0 1 249.1 268.82Z" fill="#e8342e"/><text x="239.5" y="138.5" font-size="12.3" fill="#fff" text-anchor="middle">33%</text><text x="130.5" y="184" font-size="12.3" fill="#fff" text-anchor="middle">58%</text><text x="230.5" y="210" font-size="12.3" fill="#fff" text-anchor="middle">8%</text><circle cx="382" cy="56.8" r="8" fill="#1160c4"/><text x="396.70000000000005" y="60.6" font-size="10.4" fill="#333">Complete</text><circle cx="382" cy="75.0" r="8" fill="#e8342e"/><text x="396.70000000000005" y="78.8" font-size="10.4" fill="#333">In Progress</text><circle cx="382" cy="93.2" r="8" fill="#ff8c00"/><text x="396.70000000000005" y="97.0" font-size="10.4" fill="#333">Not Started</text></svg></div>
<div class="card" style="left:523px;top:81px;width:488px;height:302.5px"><div class="ch">Items Distribution</div>
<svg class="abs" style="left:0;top:1px" width="488" height="301" viewBox="0 0 488 301"><path d="M59.5 44 V244.39999999999998 H448" fill="none" stroke="#e2e2e2" stroke-width="1"/><text x="51.5" y="247.5" font-size="10.6" fill="#333" text-anchor="end">0</text><text x="51.5" y="225.3" font-size="10.6" fill="#333" text-anchor="end">0.5</text><text x="51.5" y="203.2" font-size="10.6" fill="#333" text-anchor="end">1</text><text x="51.5" y="181.0" font-size="10.6" fill="#333" text-anchor="end">1.5</text><text x="51.5" y="158.8" font-size="10.6" fill="#333" text-anchor="end">2</text><text x="51.5" y="136.7" font-size="10.6" fill="#333" text-anchor="end">2.5</text><text x="51.5" y="114.5" font-size="10.6" fill="#333" text-anchor="end">3</text><text x="51.5" y="92.3" font-size="10.6" fill="#333" text-anchor="end">3.5</text><text x="51.5" y="70.2" font-size="10.6" fill="#333" text-anchor="end">4</text><text x="51.5" y="48.0" font-size="10.6" fill="#333" text-anchor="end">4.5</text><rect x="73.0" y="110.9" width="70.0" height="133.0" fill="#1160c4"/><text x="108.0" y="103.7" font-size="11.8" fill="#222" text-anchor="middle">3</text><text x="108.0" y="259.79999999999995" font-size="10.35" fill="#333" text-anchor="middle">Allan Charles Swamy</text><rect x="170.3" y="110.9" width="70.1" height="133.0" fill="#1160c4"/><text x="205.3" y="103.7" font-size="11.8" fill="#222" text-anchor="middle">3</text><text x="205.3" y="259.79999999999995" font-size="10.35" fill="#333" text-anchor="middle">Harsha Mahant</text><rect x="267.4" y="155.2" width="69.8" height="88.7" fill="#1160c4"/><text x="302.3" y="148.0" font-size="11.8" fill="#222" text-anchor="middle">2</text><text x="302.3" y="259.79999999999995" font-size="10.35" fill="#333" text-anchor="middle">Jai Bhardwaj</text><rect x="364.9" y="66.6" width="70.1" height="177.3" fill="#1160c4"/><text x="400.0" y="59.4" font-size="11.8" fill="#222" text-anchor="middle">4</text><text x="400.0" y="259.79999999999995" font-size="10.35" fill="#333" text-anchor="middle">Shrey Yadav</text></svg></div>
<div class="card" style="left:209.5px;top:395px;width:650.7px;height:162.5px"><div class="ch" style="height:21.7px;line-height:22.6px">Upcoming Tasks</div>
<div class="abs" style="left:0;top:21.7px;width:651px;height:28.6px;background:#f7f7f7"></div><div class="vl" style="left:105.2px;top:21.7px;height:28.6px"></div><div class="vl" style="left:194.5px;top:21.7px;height:28.6px"></div><div class="vl" style="left:310.4px;top:21.7px;height:28.6px"></div><div class="vl" style="left:392.3px;top:21.7px;height:28.6px"></div><div class="vl" style="left:475.3px;top:21.7px;height:28.6px"></div><div class="vl" style="left:550.5px;top:21.7px;height:28.6px"></div><div class="gl" style="left:0;top:50px;width:651px"></div><span class="t" style="left:3.3px;top:30px;font-weight:bold;font-size:10.1px">Sr. No.</span><span class="th" style="left:108.8px;top:24.6px">Description of<br>Goods</span><span class="th" style="left:197.8px;top:30.2px">Assigned To</span><span class="th" style="left:314.0px;top:30.2px">Start Date</span><span class="th" style="left:396.1px;top:30.2px">End Date</span><span class="th" style="left:478.5px;top:30.2px">% Complete</span><span class="th" style="left:554.3px;top:30.2px">Order ID</span><span class="bt" style="left:21.5px;top:53px">Total</span><span class="cnt" style="left:587.0px;top:53.3px;width:60px">Count</span><span class="bt tr" style="left:587.0px;top:62.8px;width:60px">2</span><div class="bl" style="left:0;top:88px;width:651px"></div><div class="abs" style="left:105.7px;top:90.2px;width:89.3px;height:17px;background:#ffffe6"></div><div class="abs" style="left:551.0px;top:90.2px;width:100px;height:17px;background:#ffffe6"></div><div class="abs" style="left:105.7px;top:107.2px;width:89.3px;height:17px;background:#ffffe6"></div><div class="abs" style="left:551.0px;top:107.2px;width:100px;height:17px;background:#ffffe6"></div><div class="vl" style="left:105.2px;top:90px;height:34px;background:#e4e4e4"></div><div class="vl" style="left:194.5px;top:90px;height:34px;background:#e4e4e4"></div><div class="vl" style="left:310.4px;top:90px;height:34px;background:#e4e4e4"></div><div class="vl" style="left:392.3px;top:90px;height:34px;background:#e4e4e4"></div><div class="vl" style="left:475.3px;top:90px;height:34px;background:#e4e4e4"></div><div class="vl" style="left:550.5px;top:90px;height:34px;background:#e4e4e4"></div><div class="gl" style="left:0;top:106.8px;width:651px"></div><span class="t" style="left:31.1px;top:92.8px">2</span><span class="t" style="left:108.8px;top:92.8px">RSE 80/80</span><span class="t" style="left:197.8px;top:92.8px">Harsha Mahant</span><span class="t" style="left:314.0px;top:92.8px">5-Apr-2024</span><span class="t" style="left:396.1px;top:92.8px">24-Apr-2024</span><span class="t tr" style="left:488.5px;top:92.8px;width:60px">0%</span><span class="t" style="left:554.3px;top:92.8px">STEER - 004</span><div class="gl" style="left:0;top:123.8px;width:651px"></div><span class="t" style="left:31.1px;top:109.8px">2</span><span class="t" style="left:108.8px;top:109.8px">RSE 80/80</span><span class="t" style="left:197.8px;top:109.8px">Harsha Mahant</span><span class="t" style="left:314.0px;top:109.8px">5-Apr-2024</span><span class="t" style="left:396.1px;top:109.8px">24-Apr-2024</span><span class="t tr" style="left:488.5px;top:109.8px;width:60px">0%</span><span class="t" style="left:554.3px;top:109.8px">STEER - 005</span><div class="abs" style="left:450.7px;top:93.7px;width:57.6px;height:45px;background:linear-gradient(100deg,#f0f0f0 30%,#fafafa)"></div></div>
<div class="card" style="left:221px;top:569px;width:604.1px;height:240px;border-radius:7px 7px 0 0"><div class="ch" style="height:22.4px;line-height:22.6px;background:#f77e7e;color:#111">Overbudget Items</div>
<div class="abs" style="left:0;top:22.3px;width:605px;height:28.2px;background:#f7f7f7"></div><div class="gl" style="left:0;top:50.3px;width:605px"></div><span class="t" style="left:3.3px;top:30.6px;font-weight:bold;font-size:10.1px">Sr. No.</span><span class="th" style="left:109px;top:25.2px">Description of<br>Goods</span><span class="th" style="left:198.3px;top:30.8px">Total Cost</span><span class="th" style="left:269px;top:30.8px">Actual Cost</span><span class="th" style="left:340.6px;top:30.8px">Variance</span><span class="th" style="left:411.7px;top:30.8px">Order ID</span><div class="vl" style="left:105.3px;top:22.3px;height:28.2px"></div><div class="vl" style="left:194.5px;top:22.3px;height:28.2px"></div><div class="vl" style="left:265.6px;top:22.3px;height:28.2px"></div><div class="vl" style="left:336.9px;top:22.3px;height:28.2px"></div><div class="vl" style="left:407.9px;top:22.3px;height:28.2px"></div><span class="bt" style="left:21.6px;top:53.6px">Total</span><span class="cnt" style="left:540.8px;top:53.4px;width:60px">Count</span><span class="bt tr" style="left:540.8px;top:62.6px;width:60px">5</span><div class="bl" style="left:0;top:89px;width:605px"></div><span class="bt" style="left:21.6px;top:103.1px">STEER - 004</span><span class="cnt" style="left:540.8px;top:92.7px;width:60px">Count</span><span class="bt tr" style="left:540.8px;top:102.5px;width:60px">1</span><div class="bl" style="left:0;top:128px;width:605px"></div><div class="abs" style="left:105.8px;top:129.4px;width:160.3px;height:16.2px;background:#ffffe6"></div><div class="abs" style="left:337.4px;top:129.4px;width:71px;height:16.2px;background:#ffe9ec"></div><div class="abs" style="left:408.4px;top:129.4px;width:196px;height:16.2px;background:#ffffe6"></div><div class="vl" style="left:105.3px;top:129.4px;height:16.2px;background:#e8e8e8"></div><div class="vl" style="left:194.5px;top:129.4px;height:16.2px;background:#e8e8e8"></div><div class="vl" style="left:265.6px;top:129.4px;height:16.2px;background:#e8e8e8"></div><div class="vl" style="left:336.9px;top:129.4px;height:16.2px;background:#e8e8e8"></div><div class="vl" style="left:407.9px;top:129.4px;height:16.2px;background:#e8e8e8"></div><div class="gl" style="left:0;top:145.6px;width:605px"></div><span class="t" style="left:109px;top:132.0px">RSE 30/30</span><span class="t tr" style="left:184px;top:132.0px;width:80px"><span class="ru">₹</span>100,000</span><span class="t tr" style="left:254.8px;top:132.0px;width:80px"><span class="ru">₹</span>110,000</span><span class="t tr" style="left:326.7px;top:132.0px;width:80px"><span class="ru">₹</span>10,000</span><span class="t" style="left:411.7px;top:132.0px">STEER - 004</span><span class="bt" style="left:21.6px;top:159.1px">STEER - 008</span><span class="cnt" style="left:540.8px;top:148.7px;width:60px">Count</span><span class="bt tr" style="left:540.8px;top:158.5px;width:60px">1</span><div class="bl" style="left:0;top:184px;width:605px"></div><div class="abs" style="left:105.8px;top:185.4px;width:160.3px;height:16.2px;background:#ffffe6"></div><div class="abs" style="left:337.4px;top:185.4px;width:71px;height:16.2px;background:#ffe9ec"></div><div class="abs" style="left:408.4px;top:185.4px;width:196px;height:16.2px;background:#ffffe6"></div><div class="vl" style="left:105.3px;top:185.4px;height:16.2px;background:#e8e8e8"></div><div class="vl" style="left:194.5px;top:185.4px;height:16.2px;background:#e8e8e8"></div><div class="vl" style="left:265.6px;top:185.4px;height:16.2px;background:#e8e8e8"></div><div class="vl" style="left:336.9px;top:185.4px;height:16.2px;background:#e8e8e8"></div><div class="vl" style="left:407.9px;top:185.4px;height:16.2px;background:#e8e8e8"></div><div class="gl" style="left:0;top:201.6px;width:605px"></div><span class="t" style="left:109px;top:188.0px">RSE 30/30</span><span class="t tr" style="left:184px;top:188.0px;width:80px"><span class="ru">₹</span>50,000</span><span class="t tr" style="left:254.8px;top:188.0px;width:80px"><span class="ru">₹</span>80,000</span><span class="t tr" style="left:326.7px;top:188.0px;width:80px"><span class="ru">₹</span>30,000</span><span class="t" style="left:411.7px;top:188.0px">STEER - 008</span><span class="bt" style="left:21.6px;top:215.1px">Steer - 014</span><span class="cnt" style="left:540.8px;top:204.7px;width:60px">Count</span><span class="bt tr" style="left:540.8px;top:214.5px;width:60px">1</span><div class="abs" style="left:20.2px;top:87.3px;width:47.6px;height:128.6px;background:linear-gradient(170deg,#fbfbfb,#f1f1f1 55%,#f4f4f4)"></div></div>
</div></div>
</body></html>
